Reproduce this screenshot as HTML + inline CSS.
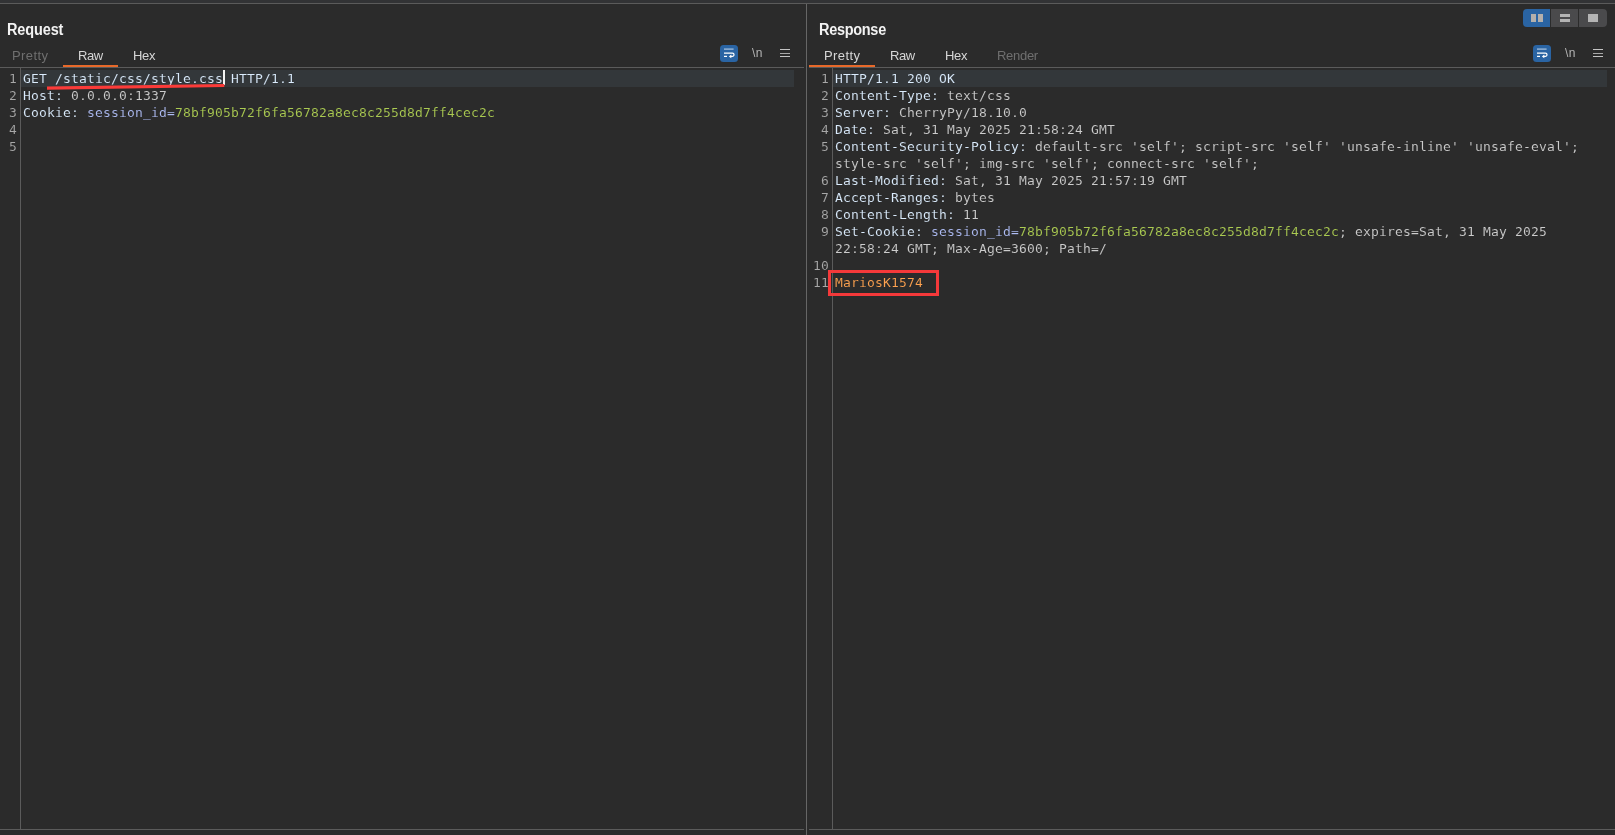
<!DOCTYPE html>
<html lang="en">
<head>
<meta charset="utf-8">
<title>Repeater</title>
<style>
  html, body { margin: 0; padding: 0; }
  body {
    width: 1615px; height: 835px; overflow: hidden; position: relative;
    background: #2b2b2b;
    font-family: "Liberation Sans", "DejaVu Sans", sans-serif;
    color: #dcdcdc;
  }
  .abs { position: absolute; }
  .hl { position: absolute; background: #5b5b5b; }
  .title {
    position: absolute; top: 21px; height: 18px; line-height: 18px;
    font-size: 14.5px; font-weight: bold; color: #f2f2f2; white-space: nowrap;
    letter-spacing: -0.3px; will-change: transform;
    transform: scaleY(1.14); transform-origin: 0 14px;
  }
  .tab {
    position: absolute; top: 48px; height: 16px; line-height: 16px;
    font-size: 13px; color: #d6d6d6; white-space: nowrap; will-change: transform;
  }
  .tab.dim { color: #6f6f6f; }
  .orange { position: absolute; top: 65px; height: 2px; background: #e8692a; }
  .rowhl { position: absolute; top: 70px; height: 17px; background: #33373a; }
  .code {
    position: absolute; top: 70px; margin: 0;
    font-family: "DejaVu Sans Mono", "Liberation Mono", monospace;
    font-size: 13px; letter-spacing: 0.173px; line-height: 17px;
    white-space: pre; color: #cdcdcd; will-change: transform;
    -webkit-text-stroke: 0.1px #2b2b2b;
  }
  .ln { color: #a8a8a8; text-align: right; }
  .r1 { -webkit-text-stroke-color: #33373a; }
  .h { color: #dbecfd; }
  .v { color: #cdcdcd; }
  .ck { color: #afbdf5; }
  .cv { color: #abcb52; }
  .bd { color: #ffa350; }
  .wrapbtn { position: absolute; top: 45px; width: 18px; height: 17px; border-radius: 3.5px; background: #2a64a3; }
  .nl { will-change: transform; position: absolute; top: 45.5px; font-size: 12px; line-height: 14px; color: #b4b4b4; letter-spacing: 0.3px; }
  .ham { position: absolute; top: 49px; width: 10px; height: 8px; }
  .ham i { position: absolute; left: 0; width: 10px; height: 1.3px; background: #c4c4c4; }
</style>
</head>
<body>
  <!-- top border line -->
  <div class="abs" style="left:0;top:0;width:1615px;height:3px;background:#323335;"></div>
  <div class="hl" style="left:0;top:3px;width:1615px;height:1px;"></div>

  <!-- ============ REQUEST PANEL ============ -->
  <div class="title" style="left:7px;letter-spacing:-0.13px;">Request</div>
  <div class="tab dim" style="left:12px;letter-spacing:0.4px;">Pretty</div>
  <div class="tab" style="left:78px;letter-spacing:-0.4px;">Raw</div>
  <div class="tab" style="left:133px;letter-spacing:-0.35px;">Hex</div>
  <div class="orange" style="left:63px;width:55px;"></div>
  <div class="hl" style="left:0;top:67px;width:804px;height:1px;"></div>

  <div class="wrapbtn" style="left:720px;">
    <svg width="18" height="17" viewBox="0 0 18 17"><g fill="none" stroke-width="1.25"><path d="M4 4.1H13.6" stroke="#a9c3e1"/><path d="M4 8.2H12.4A1.6 1.6 0 0 1 12.4 11.4H10.6" stroke="#fff"/><path d="M4 11.4H7" stroke="#fff"/></g><path d="M11.3 9.6L8.9 11.4L11.3 13.2Z" fill="#fff"/></svg>
  </div>
  <div class="nl" style="left:752px;">\n</div>
  <div class="ham" style="left:780px;"><i style="top:0"></i><i style="top:3.6px;background:#a8a8a8"></i><i style="top:6.9px"></i></div>

  <div class="rowhl" style="left:21px;width:773px;"></div>
  <div class="hl" style="left:20px;top:68px;width:1px;height:761px;"></div>
  <pre class="code ln" style="left:-0.5px;width:17px;">1
2
3
4
5</pre>
  <pre class="code" style="left:23px;"><span class="h r1">GET /static/css/style.css HTTP/1.1</span>
<span class="h">Host: </span><span class="v">0.0.0.0:1337</span>
<span class="h">Cookie: </span><span class="ck">session_id=</span><span class="cv">78bf905b72f6fa56782a8ec8c255d8d7ff4cec2c</span></pre>
  <!-- caret -->
  <div class="abs" style="left:223px;top:70px;width:1.5px;height:15px;background:#f4f4f4;"></div>
  <!-- red underline annotation -->
  <svg class="abs" style="left:40px;top:80px;" width="200" height="14" viewBox="40 80 200 14"><path d="M47 88.1 L224.3 85.5" stroke="#fb3b39" stroke-width="3.2" stroke-linecap="butt" fill="none"/></svg>

  <div class="hl" style="left:0;top:829px;width:804px;height:1px;"></div>

  <!-- divider -->
  <div class="hl" style="left:806px;top:4px;width:1px;height:831px;background:#666;"></div>

  <!-- ============ RESPONSE PANEL ============ -->
  <div class="title" style="left:819px;">Response</div>
  <div class="tab" style="left:824px;letter-spacing:0.4px;">Pretty</div>
  <div class="tab" style="left:890px;letter-spacing:-0.4px;">Raw</div>
  <div class="tab" style="left:945px;letter-spacing:-0.35px;">Hex</div>
  <div class="tab dim" style="left:997px;letter-spacing:-0.3px;">Render</div>
  <div class="orange" style="left:809px;width:66px;"></div>
  <div class="hl" style="left:809px;top:67px;width:806px;height:1px;"></div>

  <!-- layout toggle group -->
  <div class="abs" style="left:1523px;top:9px;width:84px;height:18px;border-radius:4px;overflow:hidden;background:#2b2b2b;">
    <div class="abs" style="left:0;top:0;width:27px;height:18px;background:#2a64a3;"></div>
    <div class="abs" style="left:28px;top:0;width:27px;height:18px;background:#4a4a4c;"></div>
    <div class="abs" style="left:56px;top:0;width:28px;height:18px;background:#4a4a4c;"></div>
    <div class="abs" style="left:8px;top:5px;width:5px;height:8px;background:#b4b0ac;"></div>
    <div class="abs" style="left:15px;top:5px;width:5px;height:8px;background:#b4b0ac;"></div>
    <div class="abs" style="left:37px;top:5px;width:10px;height:3px;background:#b4b4b4;"></div>
    <div class="abs" style="left:37px;top:9.5px;width:10px;height:3.5px;background:#b4b4b4;"></div>
    <div class="abs" style="left:65px;top:5px;width:10px;height:8px;background:#b4b4b4;"></div>
  </div>

  <div class="wrapbtn" style="left:1533px;">
    <svg width="18" height="17" viewBox="0 0 18 17"><g fill="none" stroke-width="1.25"><path d="M4 4.1H13.6" stroke="#a9c3e1"/><path d="M4 8.2H12.4A1.6 1.6 0 0 1 12.4 11.4H10.6" stroke="#fff"/><path d="M4 11.4H7" stroke="#fff"/></g><path d="M11.3 9.6L8.9 11.4L11.3 13.2Z" fill="#fff"/></svg>
  </div>
  <div class="nl" style="left:1565px;">\n</div>
  <div class="ham" style="left:1593px;"><i style="top:0"></i><i style="top:3.6px;background:#a8a8a8"></i><i style="top:6.9px"></i></div>

  <div class="rowhl" style="left:833px;width:774px;"></div>
  <div class="hl" style="left:832px;top:68px;width:1px;height:761px;"></div>
  <pre class="code ln" style="left:808.5px;width:20px;">1
2
3
4
5

6
7
8
9

10
11</pre>
  <pre class="code" style="left:835px;"><span class="h r1">HTTP/1.1 200 OK</span>
<span class="h">Content-Type: </span><span class="v">text/css</span>
<span class="h">Server: </span><span class="v">CherryPy/18.10.0</span>
<span class="h">Date: </span><span class="v">Sat, 31 May 2025 21:58:24 GMT</span>
<span class="h">Content-Security-Policy: </span><span class="v">default-src 'self'; script-src 'self' 'unsafe-inline' 'unsafe-eval';</span>
<span class="v">style-src 'self'; img-src 'self'; connect-src 'self';</span>
<span class="h">Last-Modified: </span><span class="v">Sat, 31 May 2025 21:57:19 GMT</span>
<span class="h">Accept-Ranges: </span><span class="v">bytes</span>
<span class="h">Content-Length: </span><span class="v">11</span>
<span class="h">Set-Cookie: </span><span class="ck">session_id=</span><span class="cv">78bf905b72f6fa56782a8ec8c255d8d7ff4cec2c</span><span class="v">; expires=Sat, 31 May 2025</span>
<span class="v">22:58:24 GMT; Max-Age=3600; Path=/</span>

<span class="bd">MariosK1574</span></pre>
  <!-- red box annotation -->
  <div class="abs" style="left:828.4px;top:269.8px;width:104.4px;height:19.8px;border:3px solid #f5393a;"></div>

  <div class="hl" style="left:809px;top:829px;width:806px;height:1px;"></div>
</body>
</html>
